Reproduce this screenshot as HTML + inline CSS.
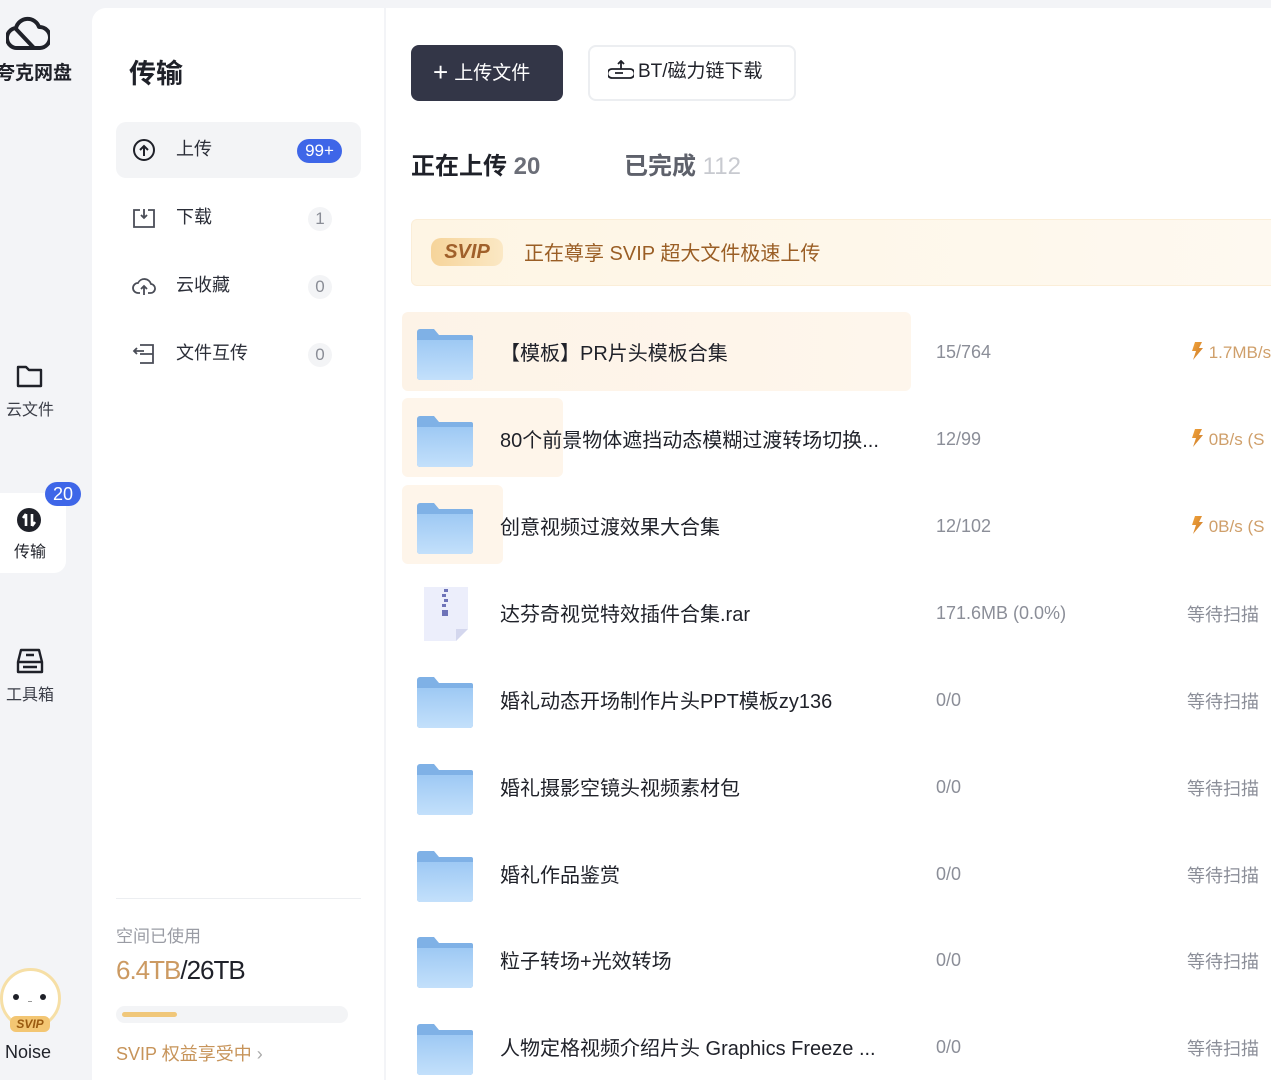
<!DOCTYPE html>
<html><head><meta charset="utf-8">
<style>
*{margin:0;padding:0;box-sizing:border-box}
html,body{width:1271px;height:1080px;overflow:hidden}
body{background:#f3f4f7;font-family:"Liberation Sans","Noto Sans CJK SC",sans-serif;color:#1f2129;position:relative}
.abs{position:absolute}
.rail{left:0;top:0;width:92px;height:1080px;background:#f3f4f7}
.mid{left:92px;top:8px;width:292px;height:1072px;background:#fff;border-top-left-radius:14px}
.main{left:386px;top:8px;width:885px;height:1072px;background:#fff}
.navt{font-size:16px;color:#3b3e48;width:60px;text-align:center}
.mi{left:116px;width:245px;height:56px;border-radius:10px;display:flex;align-items:center;padding-left:16px;font-size:18px;color:#2b2e38}
.mi span.t{position:relative;top:-2px}
.mi svg{margin-right:20px}
.cnt{position:absolute;left:192px;width:24px;height:24px;border-radius:12px;background:#f3f4f6;color:#8a8d96;font-size:17px;text-align:center;line-height:24px}
.row{left:402px;height:80px}
.fold{position:absolute;left:14px;top:16px}
.name{position:absolute;left:98px;font-size:20px;color:#1f2129;white-space:nowrap;top:25px}
.num{position:absolute;left:534px;font-size:18px;color:#8b8e98;white-space:nowrap;top:30px}
.sp{position:absolute;left:788px;font-size:17px;color:#cf9f6a;white-space:nowrap;top:30px}
.wait{position:absolute;left:785px;font-size:18px;color:#8b8e98;white-space:nowrap;top:28px}
</style></head><body>
<div class="abs rail"></div>
<svg class="abs" style="left:6px;top:14px" width="44" height="38" viewBox="0 0 44 38"><path d="M12 34 A10 10 0 0 1 10 14 A12 12 0 0 1 33 13 A10 10 0 0 1 34 34 Z M10 15 L28 34" fill="none" stroke="#1f2129" stroke-width="4" stroke-linejoin="round"/></svg>
<div class="abs" style="left:-4px;top:58px;font-size:19px;font-weight:bold;color:#1f2129">夸克网盘</div>
<svg class="abs" style="left:16px;top:364px" width="27" height="24" viewBox="0 0 27 24"><path d="M2 3h8l3 3h12v16H2z" fill="none" stroke="#1f2129" stroke-width="2.4" stroke-linejoin="round"/></svg>
<div class="abs navt" style="left:0;top:396px">云文件</div>
<div class="abs" style="left:0;top:493px;width:66px;height:80px;background:#fff;border-radius:0 12px 12px 0"></div>
<div class="abs" style="left:45px;top:482px;width:36px;height:24px;border-radius:12px;background:#3e66e8;color:#fff;font-size:18px;text-align:center;line-height:24px">20</div>
<svg class="abs" style="left:16px;top:507px" width="26" height="26" viewBox="0 0 26 26"><circle cx="13" cy="13" r="12" fill="#1f2129"/><path d="M10 7v12M10 7l-3 4M16 19V7M16 19l3-4" stroke="#fff" stroke-width="2.6" fill="none"/></svg>
<div class="abs navt" style="left:0;top:538px;color:#1f2129">传输</div>
<svg class="abs" style="left:15px;top:647px" width="30" height="28" viewBox="0 0 30 28"><path d="M6 3h18l3 12v10H3V15z M3 15h24 M11 8h8 M8 20h14" fill="none" stroke="#1f2129" stroke-width="2.4" stroke-linejoin="round"/></svg>
<div class="abs navt" style="left:0;top:681px">工具箱</div>
<div class="abs" style="left:0;top:968px;width:61px;height:61px;border-radius:50%;background:#fff;border:3px solid #f6dfa6"></div>
<div class="abs" style="left:13px;top:994px;width:6px;height:6px;border-radius:50%;background:#1f2129"></div>
<div class="abs" style="left:40px;top:994px;width:6px;height:6px;border-radius:50%;background:#1f2129"></div>
<div class="abs" style="left:28px;top:1001px;width:4px;height:1px;background:#999"></div>
<div class="abs" style="left:10px;top:1016px;width:40px;height:16px;border-radius:6px;background:#f3c673;color:#9a5a10;font-size:12px;font-weight:bold;font-style:italic;text-align:center;line-height:16px">SVIP</div>
<div class="abs" style="left:5px;top:1042px;font-size:18px;color:#1f2129">Noise</div>

<div class="abs mid"></div>
<div class="abs" style="left:129px;top:52px;font-size:27px;font-weight:bold">传输</div>
<div class="abs mi" style="top:122px;background:#f3f4f6">
<svg width="24" height="24" viewBox="0 0 24 24"><circle cx="12" cy="12" r="10" fill="none" stroke="#1f2129" stroke-width="2"/><path d="M12 18V8M8 12l4-4 4 4" fill="none" stroke="#1f2129" stroke-width="2"/></svg><span class="t">上传</span>
<div class="abs" style="left:181px;top:17px;width:45px;height:24px;border-radius:12px;background:#3e66e8;color:#fff;font-size:17px;text-align:center;line-height:24px">99+</div></div>
<div class="abs mi" style="top:190px"><svg width="24" height="24" viewBox="0 0 24 24"><path d="M8 4H2v17h20V4h-6M12 3v9M9 9l3 3 3-3" fill="none" stroke="#4a4d57" stroke-width="1.8"/></svg><span class="t">下载</span><div class="cnt" style="top:17px">1</div></div>
<div class="abs mi" style="top:258px"><svg width="24" height="24" viewBox="0 0 24 24"><path d="M8 19H6a5 5 0 0 1 0-10 7 7 0 0 1 13 1 4 4 0 0 1-1 9h-2M12 21v-9M9 15l3-3 3 3" fill="none" stroke="#4a4d57" stroke-width="1.8"/></svg><span class="t">云收藏</span><div class="cnt" style="top:17px">0</div></div>
<div class="abs mi" style="top:326px"><svg width="24" height="24" viewBox="0 0 24 24"><path d="M8 3h13v18H8M8 12h13M2 9h10M5 6L2 9l3 3" fill="none" stroke="#4a4d57" stroke-width="1.8"/></svg><span class="t">文件互传</span><div class="cnt" style="top:17px">0</div></div>
<div class="abs" style="left:116px;top:898px;width:245px;height:1px;background:#eceef1"></div>
<div class="abs" style="left:116px;top:922px;font-size:17px;color:#9a9ca4">空间已使用</div>
<div class="abs" style="left:116px;top:955px;font-size:26px;letter-spacing:-1px"><span style="color:#cc9a62">6.4TB</span><span style="color:#1f2129">/26TB</span></div>
<div class="abs" style="left:116px;top:1006px;width:232px;height:17px;border-radius:9px;background:#f3f4f6"></div>
<div class="abs" style="left:122px;top:1012px;width:55px;height:5px;border-radius:3px;background:#f0c77a"></div>
<div class="abs" style="left:116px;top:1040px;font-size:18px;color:#c7945a">SVIP 权益享受中 <span style="color:#aaa">›</span></div>

<div class="abs main"></div>
<div class="abs" style="left:411px;top:45px;width:152px;height:56px;border-radius:8px;background:#333647;color:#fff;font-size:19px;line-height:54px;padding-left:22px"><span style="font-size:26px;vertical-align:-2px;margin-right:6px">+</span>上传文件</div>
<div class="abs" style="left:588px;top:45px;width:208px;height:56px;border-radius:8px;border:2px solid #eceef1;background:#fff;font-size:19px;line-height:50px;padding-left:18px;color:#1f2129"><svg width="26" height="20" viewBox="0 0 26 20" style="vertical-align:-3px;margin-right:4px"><path d="M13 1v8M10 4l3-3 3 3M4 9h18a3 3 0 0 1 0 9H4a3 3 0 0 1 0-9zM7 13h8" fill="none" stroke="#1f2129" stroke-width="1.8"/></svg>BT/磁力链下载</div>
<div class="abs" style="left:411px;top:146px;font-size:24px;font-weight:bold">正在上传 <span style="color:#6b6e78">20</span></div>
<div class="abs" style="left:624px;top:146px;font-size:24px;font-weight:bold;color:#5e616b">已完成 <span style="color:#c8cad0;font-weight:normal">112</span></div>
<div class="abs" style="left:411px;top:219px;width:870px;height:67px;border-radius:6px;background:linear-gradient(90deg,#fef5e4,#fef9f0);border:1px solid #fbeed8"></div>
<div class="abs" style="left:431px;top:238px;width:72px;height:28px;border-radius:10px;background:linear-gradient(90deg,#f6d49a,#fbe8c4);color:#a0602a;font-size:20px;font-weight:bold;font-style:italic;text-align:center;line-height:28px">SVIP</div>
<div class="abs" style="left:524px;top:237px;font-size:20px;color:#9a5e25">正在尊享 SVIP 超大文件极速上传</div>

<div class="abs" style="left:402px;top:312px;width:509px;height:79px;border-radius:6px;background:linear-gradient(90deg,#fdf3e7,#fef6ec)"></div>
<div class="abs" style="left:402px;top:398px;width:161px;height:79px;border-radius:6px;background:#fef5ea"></div>
<div class="abs" style="left:402px;top:485px;width:101px;height:79px;border-radius:6px;background:#fef5ea"></div>

<svg width="0" height="0" style="position:absolute"><defs>
<linearGradient id="fg" x1="0" y1="0" x2="0" y2="1"><stop offset="0" stop-color="#9ec9f4"/><stop offset="1" stop-color="#c3e0fb"/></linearGradient>
<linearGradient id="bg" x1="0" y1="0" x2="1" y2="1"><stop offset="0" stop-color="#f2a43a"/><stop offset="1" stop-color="#c9782a"/></linearGradient></defs></svg>

<div class="abs row" style="top:312px"><svg class="fold" width="58" height="52" viewBox="0 0 58 52"><path d="M1 4a3 3 0 0 1 3-3h14l5 6h32a2 2 0 0 1 2 2v40a3 3 0 0 1-3 3H4a3 3 0 0 1-3-3z" fill="#7fb1e6"/><path d="M1 12h56v37a3 3 0 0 1-3 3H4a3 3 0 0 1-3-3z" fill="url(#fg)"/></svg>
<div class="name">【模板】PR片头模板合集</div><div class="num">15/764</div><div class="sp"><svg width="14" height="18" viewBox="0 0 14 18" style="vertical-align:-2px"><path d="M5 0h7L9 6h4L3 18l3-9H2z" fill="url(#bg)"/></svg> 1.7MB/s</div></div>
<div class="abs row" style="top:399px"><svg class="fold" width="58" height="52" viewBox="0 0 58 52"><path d="M1 4a3 3 0 0 1 3-3h14l5 6h32a2 2 0 0 1 2 2v40a3 3 0 0 1-3 3H4a3 3 0 0 1-3-3z" fill="#7fb1e6"/><path d="M1 12h56v37a3 3 0 0 1-3 3H4a3 3 0 0 1-3-3z" fill="url(#fg)"/></svg>
<div class="name">80个前景物体遮挡动态模糊过渡转场切换...</div><div class="num">12/99</div><div class="sp"><svg width="14" height="18" viewBox="0 0 14 18" style="vertical-align:-2px"><path d="M5 0h7L9 6h4L3 18l3-9H2z" fill="url(#bg)"/></svg> 0B/s (S</div></div>
<div class="abs row" style="top:486px"><svg class="fold" width="58" height="52" viewBox="0 0 58 52"><path d="M1 4a3 3 0 0 1 3-3h14l5 6h32a2 2 0 0 1 2 2v40a3 3 0 0 1-3 3H4a3 3 0 0 1-3-3z" fill="#7fb1e6"/><path d="M1 12h56v37a3 3 0 0 1-3 3H4a3 3 0 0 1-3-3z" fill="url(#fg)"/></svg>
<div class="name">创意视频过渡效果大合集</div><div class="num">12/102</div><div class="sp"><svg width="14" height="18" viewBox="0 0 14 18" style="vertical-align:-2px"><path d="M5 0h7L9 6h4L3 18l3-9H2z" fill="url(#bg)"/></svg> 0B/s (S</div></div>
<div class="abs row" style="top:573px"><svg style="position:absolute;left:20px;top:12px" width="48" height="58" viewBox="0 0 48 58"><path d="M2 2h44v42L34 56H2z" fill="#eceefb"/><path d="M34 56V44h12z" fill="#d4d7ee"/><path d="M22 4h4v3h-4zM20 9h4v3h-4zM22 14h4v3h-4zM20 19h4v3h-4zM20 25h6v6h-6z" fill="#6e73b8"/></svg>
<div class="name">达芬奇视觉特效插件合集.rar</div><div class="num">171.6MB (0.0%)</div><div class="wait">等待扫描</div></div>
<div class="abs row" style="top:660px"><svg class="fold" width="58" height="52" viewBox="0 0 58 52"><path d="M1 4a3 3 0 0 1 3-3h14l5 6h32a2 2 0 0 1 2 2v40a3 3 0 0 1-3 3H4a3 3 0 0 1-3-3z" fill="#7fb1e6"/><path d="M1 12h56v37a3 3 0 0 1-3 3H4a3 3 0 0 1-3-3z" fill="url(#fg)"/></svg>
<div class="name">婚礼动态开场制作片头PPT模板zy136</div><div class="num">0/0</div><div class="wait">等待扫描</div></div>
<div class="abs row" style="top:747px"><svg class="fold" width="58" height="52" viewBox="0 0 58 52"><path d="M1 4a3 3 0 0 1 3-3h14l5 6h32a2 2 0 0 1 2 2v40a3 3 0 0 1-3 3H4a3 3 0 0 1-3-3z" fill="#7fb1e6"/><path d="M1 12h56v37a3 3 0 0 1-3 3H4a3 3 0 0 1-3-3z" fill="url(#fg)"/></svg>
<div class="name">婚礼摄影空镜头视频素材包</div><div class="num">0/0</div><div class="wait">等待扫描</div></div>
<div class="abs row" style="top:834px"><svg class="fold" width="58" height="52" viewBox="0 0 58 52"><path d="M1 4a3 3 0 0 1 3-3h14l5 6h32a2 2 0 0 1 2 2v40a3 3 0 0 1-3 3H4a3 3 0 0 1-3-3z" fill="#7fb1e6"/><path d="M1 12h56v37a3 3 0 0 1-3 3H4a3 3 0 0 1-3-3z" fill="url(#fg)"/></svg>
<div class="name">婚礼作品鉴赏</div><div class="num">0/0</div><div class="wait">等待扫描</div></div>
<div class="abs row" style="top:920px"><svg class="fold" width="58" height="52" viewBox="0 0 58 52"><path d="M1 4a3 3 0 0 1 3-3h14l5 6h32a2 2 0 0 1 2 2v40a3 3 0 0 1-3 3H4a3 3 0 0 1-3-3z" fill="#7fb1e6"/><path d="M1 12h56v37a3 3 0 0 1-3 3H4a3 3 0 0 1-3-3z" fill="url(#fg)"/></svg>
<div class="name">粒子转场+光效转场</div><div class="num">0/0</div><div class="wait">等待扫描</div></div>
<div class="abs row" style="top:1007px"><svg class="fold" width="58" height="52" viewBox="0 0 58 52"><path d="M1 4a3 3 0 0 1 3-3h14l5 6h32a2 2 0 0 1 2 2v40a3 3 0 0 1-3 3H4a3 3 0 0 1-3-3z" fill="#7fb1e6"/><path d="M1 12h56v37a3 3 0 0 1-3 3H4a3 3 0 0 1-3-3z" fill="url(#fg)"/></svg>
<div class="name">人物定格视频介绍片头 Graphics Freeze ...</div><div class="num">0/0</div><div class="wait">等待扫描</div></div>
</body></html>
